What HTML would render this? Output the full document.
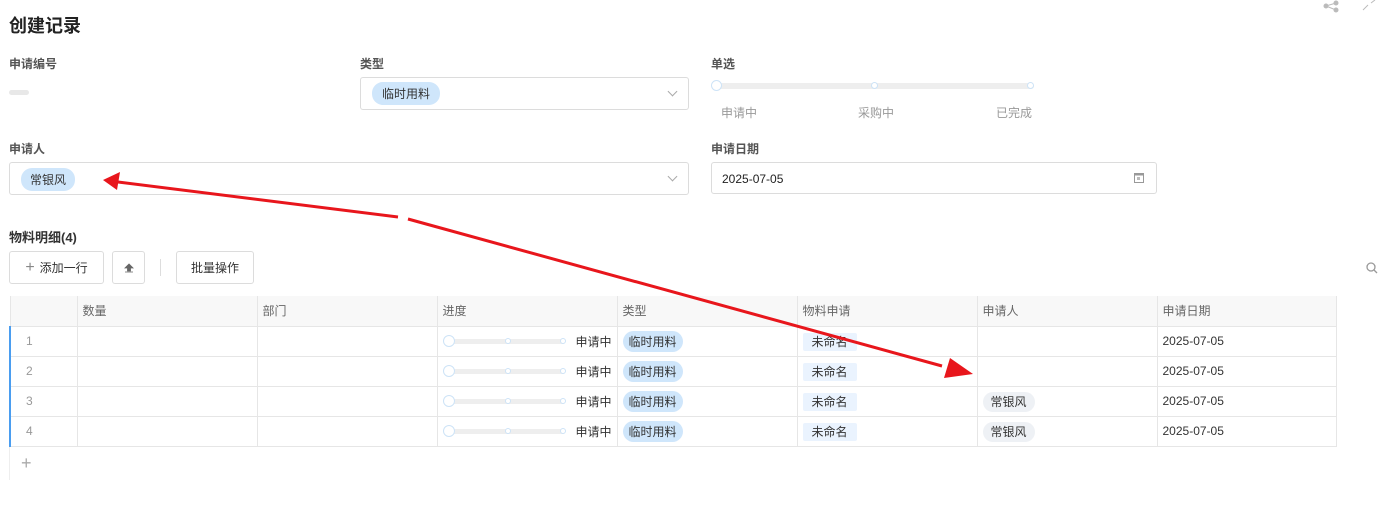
<!DOCTYPE html>
<html><head><meta charset="utf-8"><style>
*{box-sizing:border-box;margin:0;padding:0}
body{width:1378px;height:523px;background:#fff;font-family:"Liberation Sans","Noto Sans CJK SC",sans-serif;color:#333;position:relative;overflow:hidden;font-size:12px}
.a{position:absolute}
.lbl{font-size:12px;color:#555;font-weight:bold}
.box{border:1px solid #dcdcdc;border-radius:3px;background:#fff}
.tag{background:#cfe6fb;border-radius:11px;color:#333;display:inline-block;font-size:12px}
.chev{width:7px;height:7px;border-right:1px solid #aaa;border-bottom:1px solid #aaa;transform:rotate(45deg)}
.btn{border:1px solid #dcdcdc;border-radius:3px;background:#fff;font-size:12px;color:#333;display:flex;align-items:center;justify-content:center}
table{border-collapse:collapse;position:absolute;left:9px;top:296px;width:1328px}
td,th{border:1px solid #e6e6e6;height:29.3px;font-size:12px;text-align:left;padding-left:5px;font-weight:normal}
th{background:#f8f8f8;color:#666;border-top:none;height:30px}
td.n{color:#999;padding-left:15px;border-left:2px solid #4a9df0}
.sl{position:relative;height:29px}
.track{position:absolute;left:5px;top:12px;width:122px;height:5px;background:#eee;border-radius:3px}
.dot{position:absolute;border:1px solid #cde3f7;background:#fff;border-radius:50%}
.gr{background:#eaf3fe;padding:2px 9px;border-radius:2px}
.pp{background:#eef1f5;padding:3px 8px;border-radius:10px}
</style></head><body>
<div class="a" style="left:9px;top:12px;font-size:18px;font-weight:bold;color:#222">创建记录</div>
<svg class="a" style="left:1320px;top:0" width="58" height="14"><g stroke="#bbb" fill="#bbb"><circle cx="16" cy="3" r="2"/><circle cx="6" cy="6" r="2"/><circle cx="16" cy="10" r="2"/><line x1="6" y1="6" x2="16" y2="3"/><line x1="6" y1="6" x2="16" y2="10"/><line x1="43" y1="10" x2="48" y2="5"/><line x1="51" y1="3" x2="55" y2="0"/></g></svg>

<div class="a lbl" style="left:9px;top:55px">申请编号</div>
<div class="a" style="left:9px;top:90px;width:20px;height:5px;background:#e8e8e8;border-radius:3px"></div>
<div class="a lbl" style="left:360px;top:55px">类型</div>
<div class="a box" style="left:360px;top:77px;width:329px;height:33px"><span class="tag" style="position:absolute;left:11px;top:4px;padding:3px 10px">临时用料</span><div class="chev a" style="right:12px;top:10px"></div></div>
<div class="a lbl" style="left:711px;top:55px">单选</div>
<div class="a" style="left:712px;top:83px;width:322px;height:6px;background:#eee;border-radius:3px"></div>
<div class="a dot" style="left:711px;top:80px;width:11px;height:11px"></div>
<div class="a dot" style="left:871px;top:82px;width:7px;height:7px"></div>
<div class="a dot" style="left:1027px;top:82px;width:7px;height:7px"></div>
<div class="a" style="left:721px;top:104px;color:#999">申请中</div>
<div class="a" style="left:858px;top:104px;color:#999">采购中</div>
<div class="a" style="left:996px;top:104px;color:#999">已完成</div>

<div class="a lbl" style="left:9px;top:140px">申请人</div>
<div class="a box" style="left:9px;top:162px;width:680px;height:33px"><span class="tag" style="position:absolute;left:11px;top:5px;padding:3px 9px">常银风</span><div class="chev a" style="right:12px;top:10px"></div></div>
<div class="a lbl" style="left:711px;top:140px">申请日期</div>
<div class="a box" style="left:711px;top:162px;width:446px;height:32px"><span style="position:absolute;left:10px;top:9px;color:#222">2025-07-05</span>
<svg class="a" style="right:12px;top:9px" width="10" height="11"><rect x="0.5" y="1.5" width="9" height="9" fill="none" stroke="#999"/><rect x="0.5" y="1.5" width="9" height="2" fill="#999"/><rect x="3" y="5" width="3" height="3" fill="#bbb"/></svg></div>

<div class="a" style="left:9px;top:227px;font-size:13px;font-weight:bold;color:#333">物料明细(4)</div>
<div class="a btn" style="left:9px;top:251px;width:95px;height:33px"><span style="font-size:16px;color:#888;margin-right:5px">+</span>添加一行</div>
<div class="a btn" style="left:112px;top:251px;width:33px;height:33px"><svg width="10" height="10"><path d="M5 1L1 5h2.5v3h3V5H9z M1 9h8" fill="#666" stroke="#666" stroke-width="0.8"/></svg></div>
<div class="a" style="left:160px;top:259px;width:1px;height:17px;background:#ddd"></div>
<div class="a btn" style="left:176px;top:251px;width:78px;height:33px">批量操作</div>
<svg class="a" style="left:1366px;top:262px" width="12" height="12"><circle cx="5" cy="5" r="4" fill="none" stroke="#999" stroke-width="1.3"/><line x1="8" y1="8" x2="11" y2="11" stroke="#999" stroke-width="1.3"/></svg>

<table>
<tr><th style="width:67px"></th><th style="width:180px">数量</th><th style="width:180px">部门</th><th style="width:180px">进度</th><th style="width:180px">类型</th><th style="width:180px">物料申请</th><th style="width:180px">申请人</th><th>申请日期</th></tr>
<tr><td class="n">1</td><td></td><td></td><td style="padding:0"><div class="sl"><div class="track"></div><div class="dot" style="left:5px;top:8px;width:12px;height:12px"></div><div class="dot" style="left:67px;top:11px;width:6px;height:6px"></div><div class="dot" style="left:122px;top:11px;width:6px;height:6px"></div><span style="position:absolute;right:5px;top:6px">申请中</span></div></td><td><span class="tag" style="padding:2px 6px">临时用料</span></td><td><span class="gr">未命名</span></td><td></td><td>2025-07-05</td></tr>
<tr><td class="n">2</td><td></td><td></td><td style="padding:0"><div class="sl"><div class="track"></div><div class="dot" style="left:5px;top:8px;width:12px;height:12px"></div><div class="dot" style="left:67px;top:11px;width:6px;height:6px"></div><div class="dot" style="left:122px;top:11px;width:6px;height:6px"></div><span style="position:absolute;right:5px;top:6px">申请中</span></div></td><td><span class="tag" style="padding:2px 6px">临时用料</span></td><td><span class="gr">未命名</span></td><td></td><td>2025-07-05</td></tr>
<tr><td class="n">3</td><td></td><td></td><td style="padding:0"><div class="sl"><div class="track"></div><div class="dot" style="left:5px;top:8px;width:12px;height:12px"></div><div class="dot" style="left:67px;top:11px;width:6px;height:6px"></div><div class="dot" style="left:122px;top:11px;width:6px;height:6px"></div><span style="position:absolute;right:5px;top:6px">申请中</span></div></td><td><span class="tag" style="padding:2px 6px">临时用料</span></td><td><span class="gr">未命名</span></td><td><span class="pp">常银风</span></td><td>2025-07-05</td></tr>
<tr><td class="n">4</td><td></td><td></td><td style="padding:0"><div class="sl"><div class="track"></div><div class="dot" style="left:5px;top:8px;width:12px;height:12px"></div><div class="dot" style="left:67px;top:11px;width:6px;height:6px"></div><div class="dot" style="left:122px;top:11px;width:6px;height:6px"></div><span style="position:absolute;right:5px;top:6px">申请中</span></div></td><td><span class="tag" style="padding:2px 6px">临时用料</span></td><td><span class="gr">未命名</span></td><td><span class="pp">常银风</span></td><td>2025-07-05</td></tr>
</table>
<div class="a" style="left:9px;top:447px;width:1px;height:33px;background:#eee"></div>
<div class="a" style="left:21px;top:453px;font-size:18px;color:#aaa">+</div>

<svg class="a" style="left:0;top:0" width="1378" height="523">
<g stroke="#e8161c" stroke-width="3" fill="#e8161c">
<line x1="118" y1="182" x2="398" y2="217"/>
<line x1="408" y1="219" x2="942" y2="366"/>
<polygon points="103,180 120,172 117,190" stroke="none"/>
<polygon points="973,374 950,358 944,378" stroke="none"/>
</g></svg>
</body></html>
